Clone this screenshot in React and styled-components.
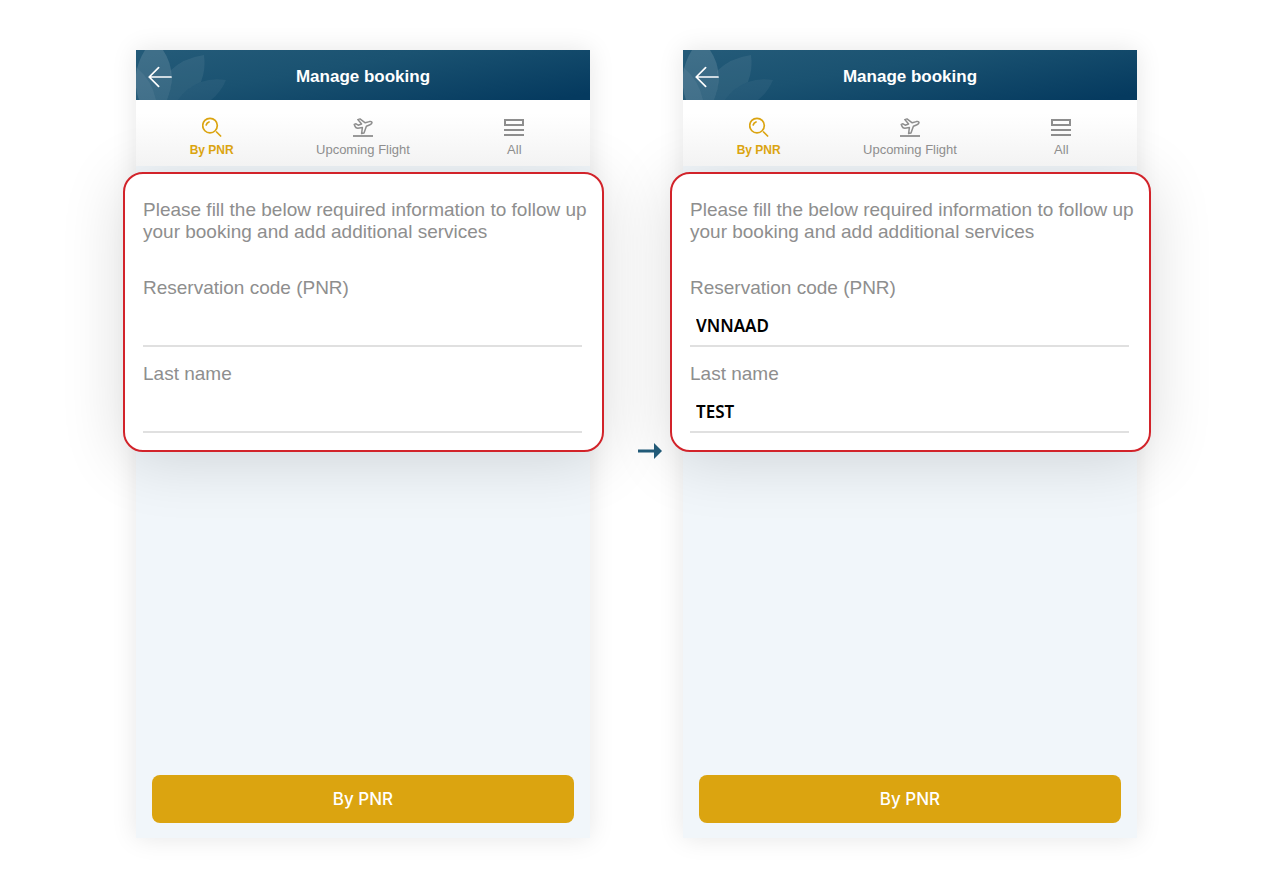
import React, { useId } from "react";
import styled, { createGlobalStyle } from "styled-components";

const GlobalStyle = createGlobalStyle`
  *, *::before, *::after { box-sizing: border-box; }
  body {
    margin: 0;
    background: #fff;
    font-family: "Liberation Sans", Arial, Helvetica, sans-serif;
  }
  button, input { font: inherit; }
`;

const Page = styled.main`
  display: flex;
  min-height: 100vh;
  padding: 50px 139px 50px 136px;
  overflow: hidden;
`;

const Phone = styled.section`
  flex: 1;
  min-width: 0;
  display: flex;
  flex-direction: column;
  background: #f1f6fa;
  box-shadow: 0 0 24px rgba(0, 0, 0, 0.1);
`;

const Header = styled.header`
  position: relative;
  z-index: 2;
  display: flex;
  align-items: center;
  height: 50px;
  padding: 3px 12px 0;
  overflow: hidden;
  background: linear-gradient(170deg, #235a78 5%, #1a5271 40%, #053a5f 95%);
`;

const Petals = styled.svg`
  position: absolute;
  left: 0;
  top: 0;
  width: 92px;
  height: 50px;
  fill: #fff;
`;

const BackButton = styled.button`
  position: relative;
  display: flex;
  padding: 0;
  border: 0;
  background: none;
  color: #fff;
`;

const Title = styled.h1`
  flex: 1;
  margin: 0;
  padding-right: 24px;
  text-align: center;
  color: #fff;
  font-size: 17px;
  line-height: 22px;
  font-weight: 700;
`;

const Tabs = styled.nav`
  position: relative;
  z-index: 2;
  display: grid;
  grid-template-columns: repeat(3, 1fr);
  height: 66px;
  background: linear-gradient(#fff 20%, #f3f3f3);
`;

const Tab = styled.button`
  display: flex;
  flex-direction: column;
  align-items: center;
  gap: 4px;
  padding: 17px 0 0;
  border: 0;
  background: none;
  color: ${(p) => (p.$active ? "#dba410" : "#8e8e8e")};
  font-size: ${(p) => (p.$active ? "12px" : "13px")};
  line-height: 18px;
  font-weight: ${(p) => (p.$active ? 700 : 400)};
`;

const Card = styled.form`
  position: relative;
  z-index: 1;
  margin: 6px -14px 0 -13px;
  padding: 25px 6px 17px 18px;
  border: 2px solid #d2232a;
  border-radius: 20px;
  background: #fff;
  box-shadow: 0 8px 64px rgba(0, 0, 0, 0.14);
`;

const Intro = styled.p`
  margin: 0 0 34px;
  color: #8e8e8e;
  font-size: 19px;
  line-height: 22px;
`;

const Field = styled.div`
  margin-right: 14px;

  & + & { margin-top: 16px; }
`;

const Label = styled.label`
  display: block;
  color: #8e8e8e;
  font-size: 19px;
  line-height: 22px;
`;

const Input = styled.input`
  display: block;
  width: 100%;
  height: 48px;
  padding: 6px 6px 0;
  border: 0;
  border-bottom: 2px solid #e0e0e0;
  outline: 0;
  background: none;
  color: #000;
  font-family: "Noto Sans", "Open Sans", sans-serif;
  font-size: 17px;
  font-weight: 600;
`;

const Submit = styled.button`
  height: 48px;
  margin: auto 16px 15px;
  border: 0;
  border-radius: 8px;
  background: #dba410;
  color: #fff;
  font-family: Inter, "Liberation Sans", sans-serif;
  font-size: 17px;
  font-weight: 500;
  line-height: 22px;
`;

const NextArrow = styled.svg`
  flex: none;
  align-self: center;
  width: 24px;
  height: 16px;
  margin: 14px 21px 0 48px;
  fill: #235d7b;
`;

function SearchIcon() {
  return (
    <svg width="20" height="20" viewBox="0 0 20 20" fill="none" stroke="currentColor" strokeWidth="1.7" strokeLinecap="round">
      <circle cx="8" cy="8.6" r="7.3" />
      <path d="M4.2 8Q4.8 5.8 7 5M14.6 15l4 4" />
    </svg>
  );
}

function FlightIcon() {
  return (
    <svg width="20" height="20" viewBox="0 0 20 20" fill="none" stroke="currentColor" strokeWidth="1.5" strokeLinejoin="round">
      <path d="M1.2 7.4 3 6.8 5.2 8.2 8.6 7 4.8 2.6 7 1.9 12.2 5.8 16.4 4.6Q18.8 4.2 19 5.6 18.9 6.9 17 7.7L13.4 9.2 11 16 8.6 16.6 9.4 10.4 4.8 11.2Q2.8 11 2.2 9.6Z" />
      <path d="M0 19h20" strokeWidth="1.8" />
    </svg>
  );
}

function ListIcon() {
  return (
    <svg width="20" height="20" viewBox="0 0 20 20" fill="none" stroke="currentColor" strokeWidth="2">
      <path d="M1 3h18v5H1ZM0 13h20M0 18h20" />
    </svg>
  );
}

function BookingScreen({ code, lastName }) {
  const id = useId();
  return (
    <Phone>
      <Header>
        <Petals viewBox="0 0 92 50" aria-hidden="true">
          <path opacity=".13" d="M9 0Q-6 24 3 50H31Q42 22 27 0Z" />
          <path opacity=".07" d="M34 21Q47 8 68 5Q70 19 65 32Q50 38 42 50H31Q37 36 34 21Z" />
          <path opacity=".05" d="M42 50Q50 38 65 32Q76 28 90 30Q85 42 75 50Z" />
          <path opacity=".06" d="M0 17Q16 30 20 50H0Z" />
        </Petals>
        <BackButton type="button" aria-label="Back">
          <svg width="24" height="22" viewBox="0 0 24 22" fill="none" stroke="currentColor" strokeWidth="1.7" strokeLinecap="round" strokeLinejoin="round">
            <path d="M10.6 1.6 1.2 11 10.6 20.4M1.2 11H23" />
          </svg>
        </BackButton>
        <Title>Manage booking</Title>
      </Header>
      <Tabs>
        <Tab type="button" $active><SearchIcon />By PNR</Tab>
        <Tab type="button"><FlightIcon />Upcoming Flight</Tab>
        <Tab type="button"><ListIcon />All</Tab>
      </Tabs>
      <Card>
        <Intro>Please fill the below required information to follow up your booking and add additional services</Intro>
        <Field>
          <Label htmlFor={`${id}-code`}>Reservation code (PNR)</Label>
          <Input id={`${id}-code`} defaultValue={code} />
        </Field>
        <Field>
          <Label htmlFor={`${id}-name`}>Last name</Label>
          <Input id={`${id}-name`} defaultValue={lastName} />
        </Field>
      </Card>
      <Submit type="button">By PNR</Submit>
    </Phone>
  );
}

export default function App() {
  return (
    <>
      <GlobalStyle />
      <Page>
        <BookingScreen />
        <NextArrow viewBox="0 0 24 16" aria-hidden="true">
          <path d="M0 6.6h16V0l8 8-8 8V9.4H0Z" />
        </NextArrow>
        <BookingScreen code="VNNAAD" lastName="TEST" />
      </Page>
    </>
  );
}
